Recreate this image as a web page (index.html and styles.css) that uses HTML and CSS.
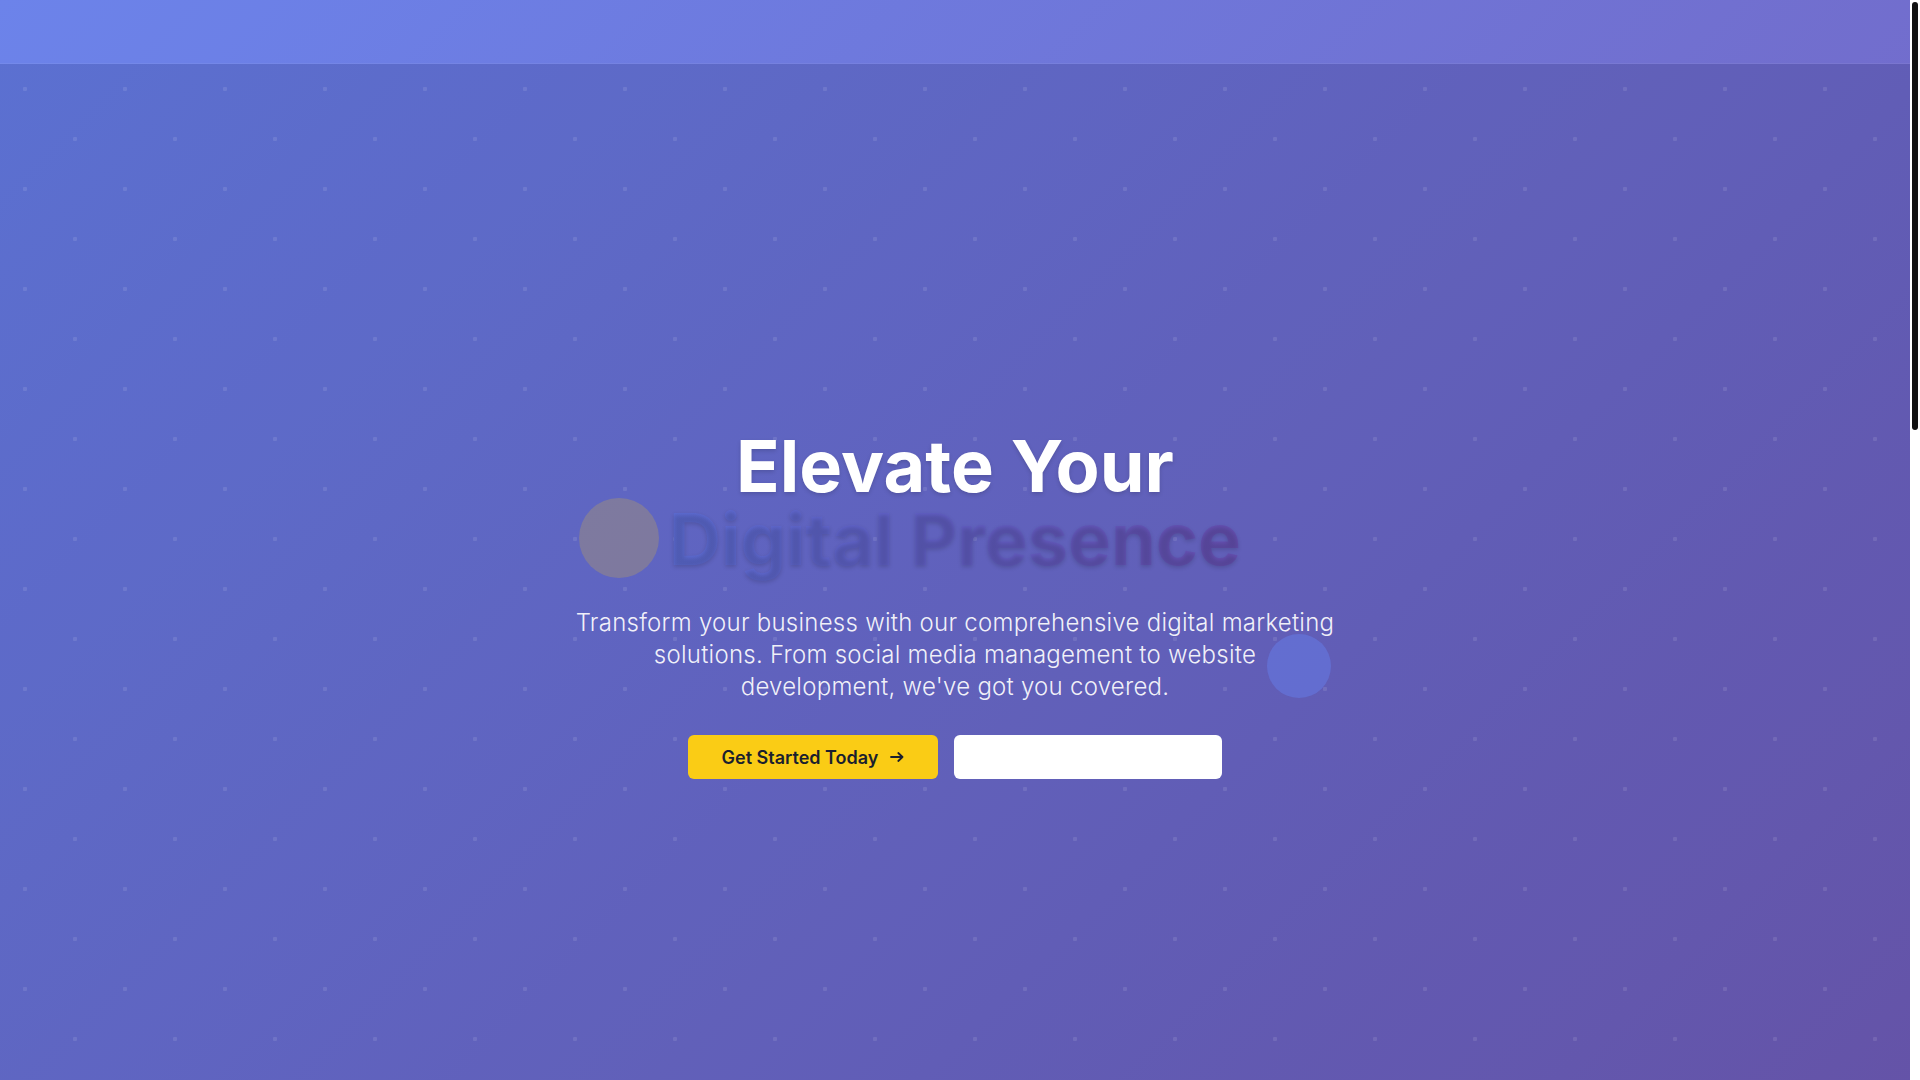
FILE: index.html
```html
<!DOCTYPE html>
<html lang="en">
<head>
<meta charset="utf-8">
<title>Elevate Your Digital Presence</title>
<link rel="stylesheet" href="styles.css">
</head>
<body>
<div class="layout">
  <div class="page">
    <header class="site-header"></header>
    <section class="hero">
      <span class="float float-yellow"></span>
      <span class="float float-blue"></span>
      <div class="hero-content">
        <h1 class="hero-title">Elevate Your<br><span class="gradient-text">Digital Presence</span></h1>
        <p class="hero-text">Transform your business with our comprehensive digital marketing solutions. From social media management to website<br>development, we've got you covered.</p>
        <div class="hero-actions">
          <a class="btn btn-primary" href="#">Get Started Today
            <svg class="btn-icon" viewBox="0 0 14 10" width="14" height="10" aria-hidden="true"><path d="M1 5h11.5M8.3 1l4.2 4-4.2 4" fill="none" stroke="currentColor" stroke-width="1.8" stroke-linecap="round" stroke-linejoin="round"/></svg>
          </a>
          <a class="btn btn-secondary" href="#">View Our Work</a>
        </div>
      </div>
    </section>
    <section class="below"></section>
  </div>
  <aside class="rail" aria-hidden="true"><span class="rail-thumb"></span></aside>
</div>
</body>
</html>
```

FILE: styles.css
```css
* { box-sizing: border-box; }

html, body {
  margin: 0;
  padding: 0;
}

body {
  font-family: Inter, "Noto Sans", "Liberation Sans", sans-serif;
  color: #fff;
  background: #fff;
}

.layout {
  display: flex;
  align-items: flex-start;
}

.page {
  flex: 1;
  min-width: 0;
  background: linear-gradient(135deg, #667eea 0%, #764ba2 100%);
}

.rail {
  position: sticky;
  top: 0;
  flex: 0 0 10px;
  height: 100vh;
  padding: 2px;
  background: #ffffff;
}

.rail-thumb {
  display: block;
  height: 428px;
  border-radius: 3px;
  background: #111111;
}

.site-header {
  height: 64px;
  background: rgba(255, 255, 255, 0.04);
  border-bottom: 1px solid rgba(255, 255, 255, 0.06);
}

.hero {
  position: relative;
  min-height: 1080px;
  display: flex;
  align-items: center;
  justify-content: center;
  overflow: hidden;
}

.hero::before {
  content: "";
  position: absolute;
  inset: 0;
  background-color: rgba(0, 0, 0, 0.1);
  background-image:
    radial-gradient(circle at 25px 25px, rgba(255, 255, 255, 0.1) 2px, transparent 2.5px),
    radial-gradient(circle at 75px 75px, rgba(255, 255, 255, 0.1) 2px, transparent 2.5px);
  background-size: 100px 100px;
}

.float {
  position: absolute;
  border-radius: 50%;
}

.float-yellow {
  width: 80px;
  height: 80px;
  left: 579px;
  top: 434px;
  background: rgba(250, 204, 21, 0.2);
}

.float-blue {
  width: 64px;
  height: 64px;
  left: 1267px;
  top: 570px;
  background: rgba(102, 126, 234, 0.5);
}

.hero-content {
  position: relative;
  max-width: 800px;
  padding: 0 18px;
  text-align: center;
}

.hero-title {
  margin: 0;
  font-size: 72px;
  line-height: 73px;
  font-weight: 700;
  color: #ffffff;
  text-shadow: 0 2px 4px rgba(0, 0, 0, 0.15);
}

.gradient-text {
  background: linear-gradient(90deg, #5d6cd3 0%, #654fb0 100%);
  -webkit-background-clip: text;
  background-clip: text;
  color: transparent;
}

.hero-text {
  margin: 32px 0 0;
  font-size: 24px;
  line-height: 32px;
  font-weight: 300;
  letter-spacing: 0.25px;
  color: rgba(255, 255, 255, 0.92);
}

.hero-actions {
  margin-top: 32px;
  display: flex;
  justify-content: center;
  gap: 16px;
}

.btn {
  display: inline-flex;
  align-items: center;
  justify-content: center;
  gap: 12px;
  height: 44px;
  padding: 0 34px;
  border-radius: 6px;
  font-size: 18px;
  font-weight: 600;
  text-decoration: none;
}

.btn-primary {
  background: #facc15;
  color: #1a1f2e;
}

.btn-icon { display: block; }

.btn-secondary {
  min-width: 268px;
  background: #ffffff;
  color: #ffffff;
}

.below {
  height: 1581px;
}
```
